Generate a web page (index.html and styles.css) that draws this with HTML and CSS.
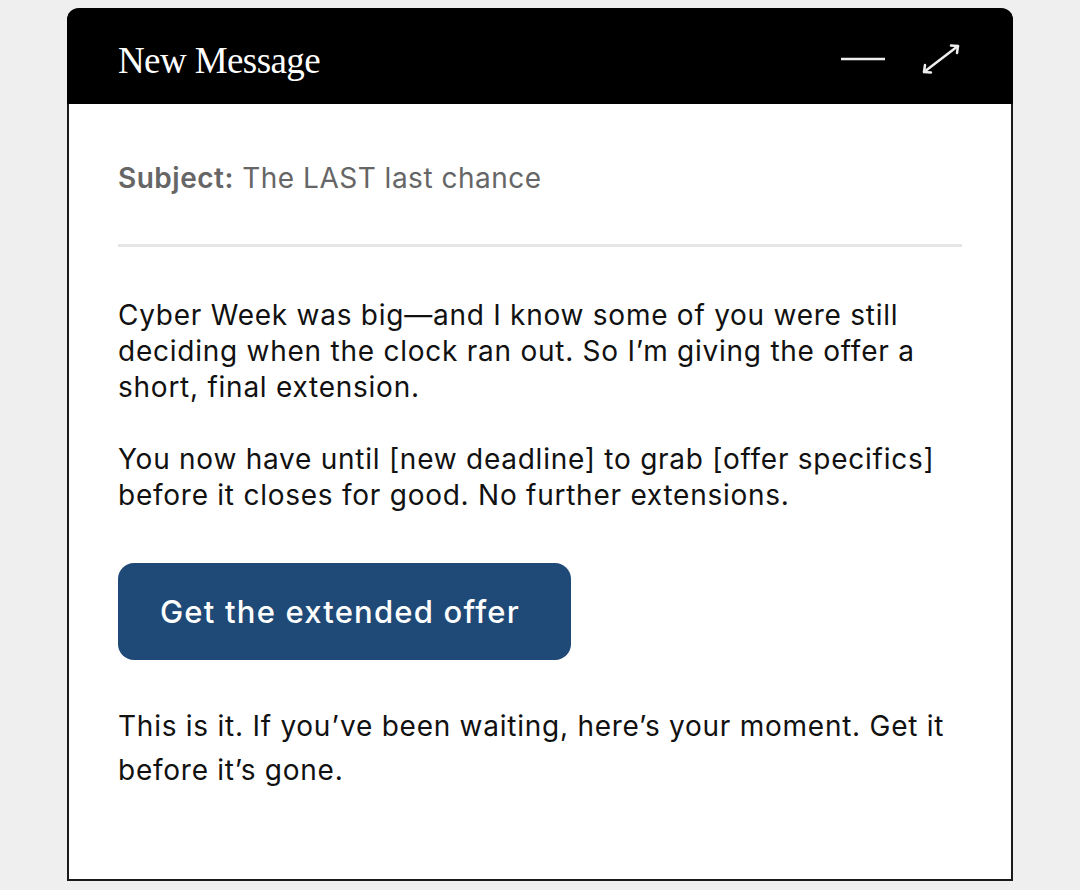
FILE: index.html
```html
<!DOCTYPE html>
<html>
<head>
<meta charset="utf-8">
<link rel="stylesheet" href="styles.css">
</head>
<body>
<div class="card">
  <div class="header">
    <div class="title">New Message</div>
    <div class="controls">
      <svg class="icon" width="48" height="40" viewBox="0 0 48 40"><line x1="2" y1="20" x2="46" y2="20" stroke="#eee" stroke-width="2.5"/></svg>
      <svg class="icon" width="40" height="40" viewBox="0 0 40 40" fill="none" stroke="#eee" stroke-width="2.5" stroke-linecap="round" stroke-linejoin="round"><line x1="3" y1="33" x2="37" y2="7"/><polyline points="4,26 3,33 10,33.5"/><polyline points="30,6.5 37,7 36,14"/></svg>
    </div>
  </div>
  <div class="body">
    <div class="subject"><b>Subject:</b> The LAST last chance</div>
    <div class="divider"></div>
    <p class="para">Cyber Week was big—and I know some of you were still deciding when the clock ran out. So I’m giving the offer a short, final extension.</p>
    <p class="para">You now have until [new deadline] to grab [offer specifics] before it closes for good. No further extensions.</p>
    <div class="btn">Get the extended offer</div>
    <p class="para last">This is it. If you’ve been waiting, here’s your moment. Get it before it’s gone.</p>
  </div>
</div>
</body>
</html>
```
FILE: styles.css
```css
html, body { margin: 0; padding: 0; }
body { background: #efefef; width: 1080px; height: 890px; overflow: hidden; }
.card {
  margin: 8px 0 0 67px;
  width: 946px;
  height: 873px;
  box-sizing: border-box;
  border: 2px solid #1a1a1a;
  border-top: none;
  border-radius: 12px 12px 0 0;
  background: #fff;
  display: flex;
  flex-direction: column;
}
.header {
  background: #000;
  height: 96px;
  margin: 0 -2px;
  border-radius: 12px 12px 0 0;
  display: flex;
  align-items: center;
  justify-content: space-between;
  padding: 0 52px 0 51px;
}
.title {
  font-family: "Liberation Serif", serif;
  color: #fff;
  font-size: 37px;
  letter-spacing: -0.6px;
  margin-top: 8px;
}
.controls { display: flex; align-items: center; gap: 34px; margin-top: 6px; }
.icon { display: block; }
.body {
  padding: 0 49px;
  font-family: "Inter", sans-serif;
  color: #111;
}
.subject {
  font-size: 28px;
  color: #666;
  margin-top: 56px;
  line-height: 36px;
  letter-spacing: 0.5px;
}
.subject b { font-weight: 600; }
.divider { height: 3px; background: #e6e6e6; margin-top: 48px; }
.para { font-size: 28px; line-height: 36px; margin: 0; letter-spacing: 0.75px; }
.divider + .para { margin-top: 50px; }
.para + .para { margin-top: 36px; }
.btn {
  margin-top: 50px;
  width: 453px;
  height: 97px;
  box-sizing: border-box;
  background: #1f4a77;
  border-radius: 16px;
  color: #fff;
  font-size: 31px;
  font-weight: 500;
  letter-spacing: 1.2px;
  display: flex;
  align-items: center;
  padding-left: 42px;
}
.para.last { margin-top: 44px; line-height: 44px; }
```
